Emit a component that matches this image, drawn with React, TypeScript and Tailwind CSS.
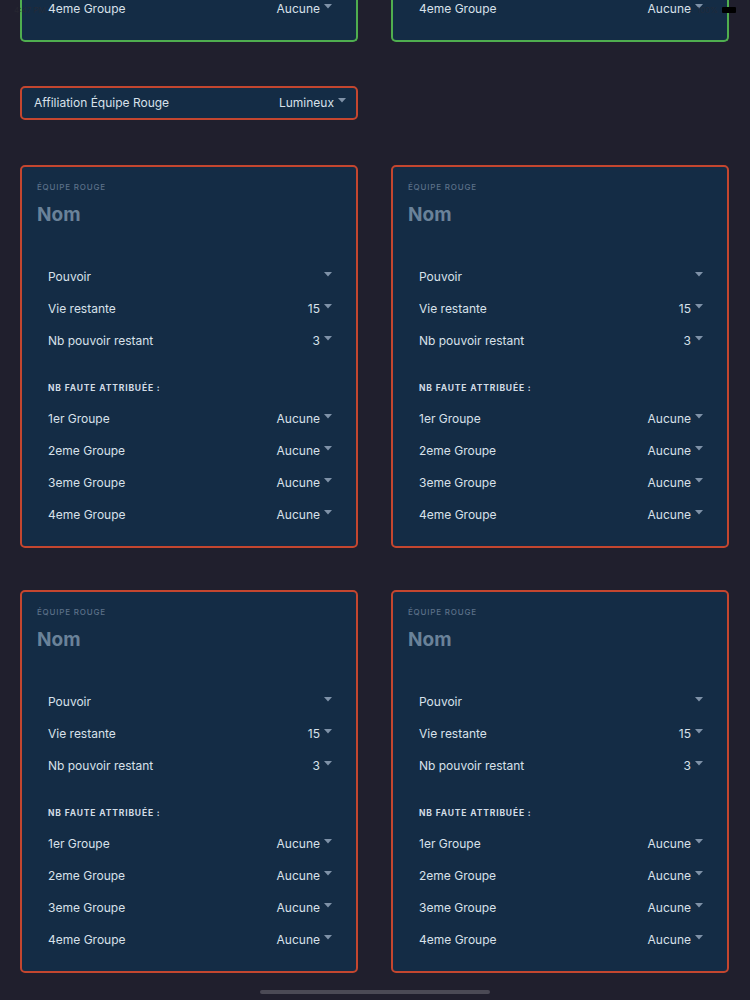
import React from 'react';

const groupes = ['1er Groupe', '2eme Groupe', '3eme Groupe', '4eme Groupe'];

const Caret = () => (
  <svg width="8" height="5" viewBox="0 0 8 5" className="mb-[6px] ml-[4px] shrink-0">
    <path d="M0 0 L8 0 L4 4.5 Z" fill="#7f92a8" />
  </svg>
);

const Row = ({ label, value }: { label: string; value?: string }) => (
  <div className="h-[32px] flex items-center justify-between">
    <span>{label}</span>
    <span className="flex items-center">
      {value && <span>{value}</span>}
      <Caret />
    </span>
  </div>
);

const TeamCard = () => (
  <div className="rounded-[5px] border-2 border-[#c4462f] bg-[#142c45] pt-[15px] pb-[15px]">
    <div className="px-[15px]">
      <p className="text-[8px] leading-[10px] tracking-[0.1em] font-medium text-[#5c7189] uppercase">Équipe rouge</p>
      <p className="mt-[11px] text-[19px] leading-[24px] font-bold text-[#6a8299]">Nom</p>
    </div>
    <div className="pl-[26px] pr-[24px] text-[12px] text-[#d8e1ea] mt-[34px]">
      <Row label="Pouvoir" />
      <Row label="Vie restante" value="15" />
      <Row label="Nb pouvoir restant" value="3" />
      <p className="mt-[26px] text-[8.5px] leading-[10px] font-bold tracking-[0.1em] text-[#d3dce6]">NB FAUTE ATTRIBUÉE :</p>
      <div className="mt-[10px]">
        {groupes.map((g) => (
          <Row key={g} label={g} value="Aucune" />
        ))}
      </div>
    </div>
  </div>
);

const GreenTail = () => (
  <div className="h-[42px] rounded-b-[5px] border-2 border-t-0 border-[#4fae4f] bg-[#142c45] pl-[26px] pr-[24px] text-[12px] text-[#d8e1ea]">
    <div className="-mt-[7px]">
      <Row label="4eme Groupe" value="Aucune" />
    </div>
  </div>
);

export default function App() {
  return (
    <div
      className="relative min-h-[1000px] bg-[#201f2d] pl-[20px] pr-[21px] pb-[20px] overflow-hidden"
      style={{ fontFamily: 'Inter, "Noto Sans", sans-serif' }}
    >
      <div className="grid grid-cols-2 gap-x-[33px]">
        <GreenTail />
        <GreenTail />
      </div>

      <div className="mt-[44px] grid grid-cols-2 gap-x-[33px]">
        <div className="h-[34px] rounded-[5px] border-2 border-[#c4462f] bg-[#142c45] pl-[12px] pr-[10px] flex items-center justify-between text-[12px] text-[#d8e1ea]">
          <span>Affiliation Équipe Rouge</span>
          <span className="flex items-center">
            <span>Lumineux</span>
            <Caret />
          </span>
        </div>
      </div>

      <div className="mt-[45px] grid grid-cols-2 gap-x-[33px] gap-y-[42px]">
        <TeamCard />
        <TeamCard />
        <TeamCard />
        <TeamCard />
      </div>

      {/* status bar */}
      <div className="absolute top-[4px] left-[14px] text-[8px] text-[#2a2a33]/70">4:47 PM</div>
      <div className="absolute top-[4px] right-[14px] flex items-center gap-[4px] text-[8px] text-[#2a2a33]/60">
        <span>100%</span>
        <span className="w-[14px] h-[6px] rounded-[1px] bg-black" />
      </div>

      {/* home indicator */}
      <div className="absolute bottom-[6px] left-[260px] w-[230px] h-[4px] rounded-full bg-[#4b4a55]" />
    </div>
  );
}
